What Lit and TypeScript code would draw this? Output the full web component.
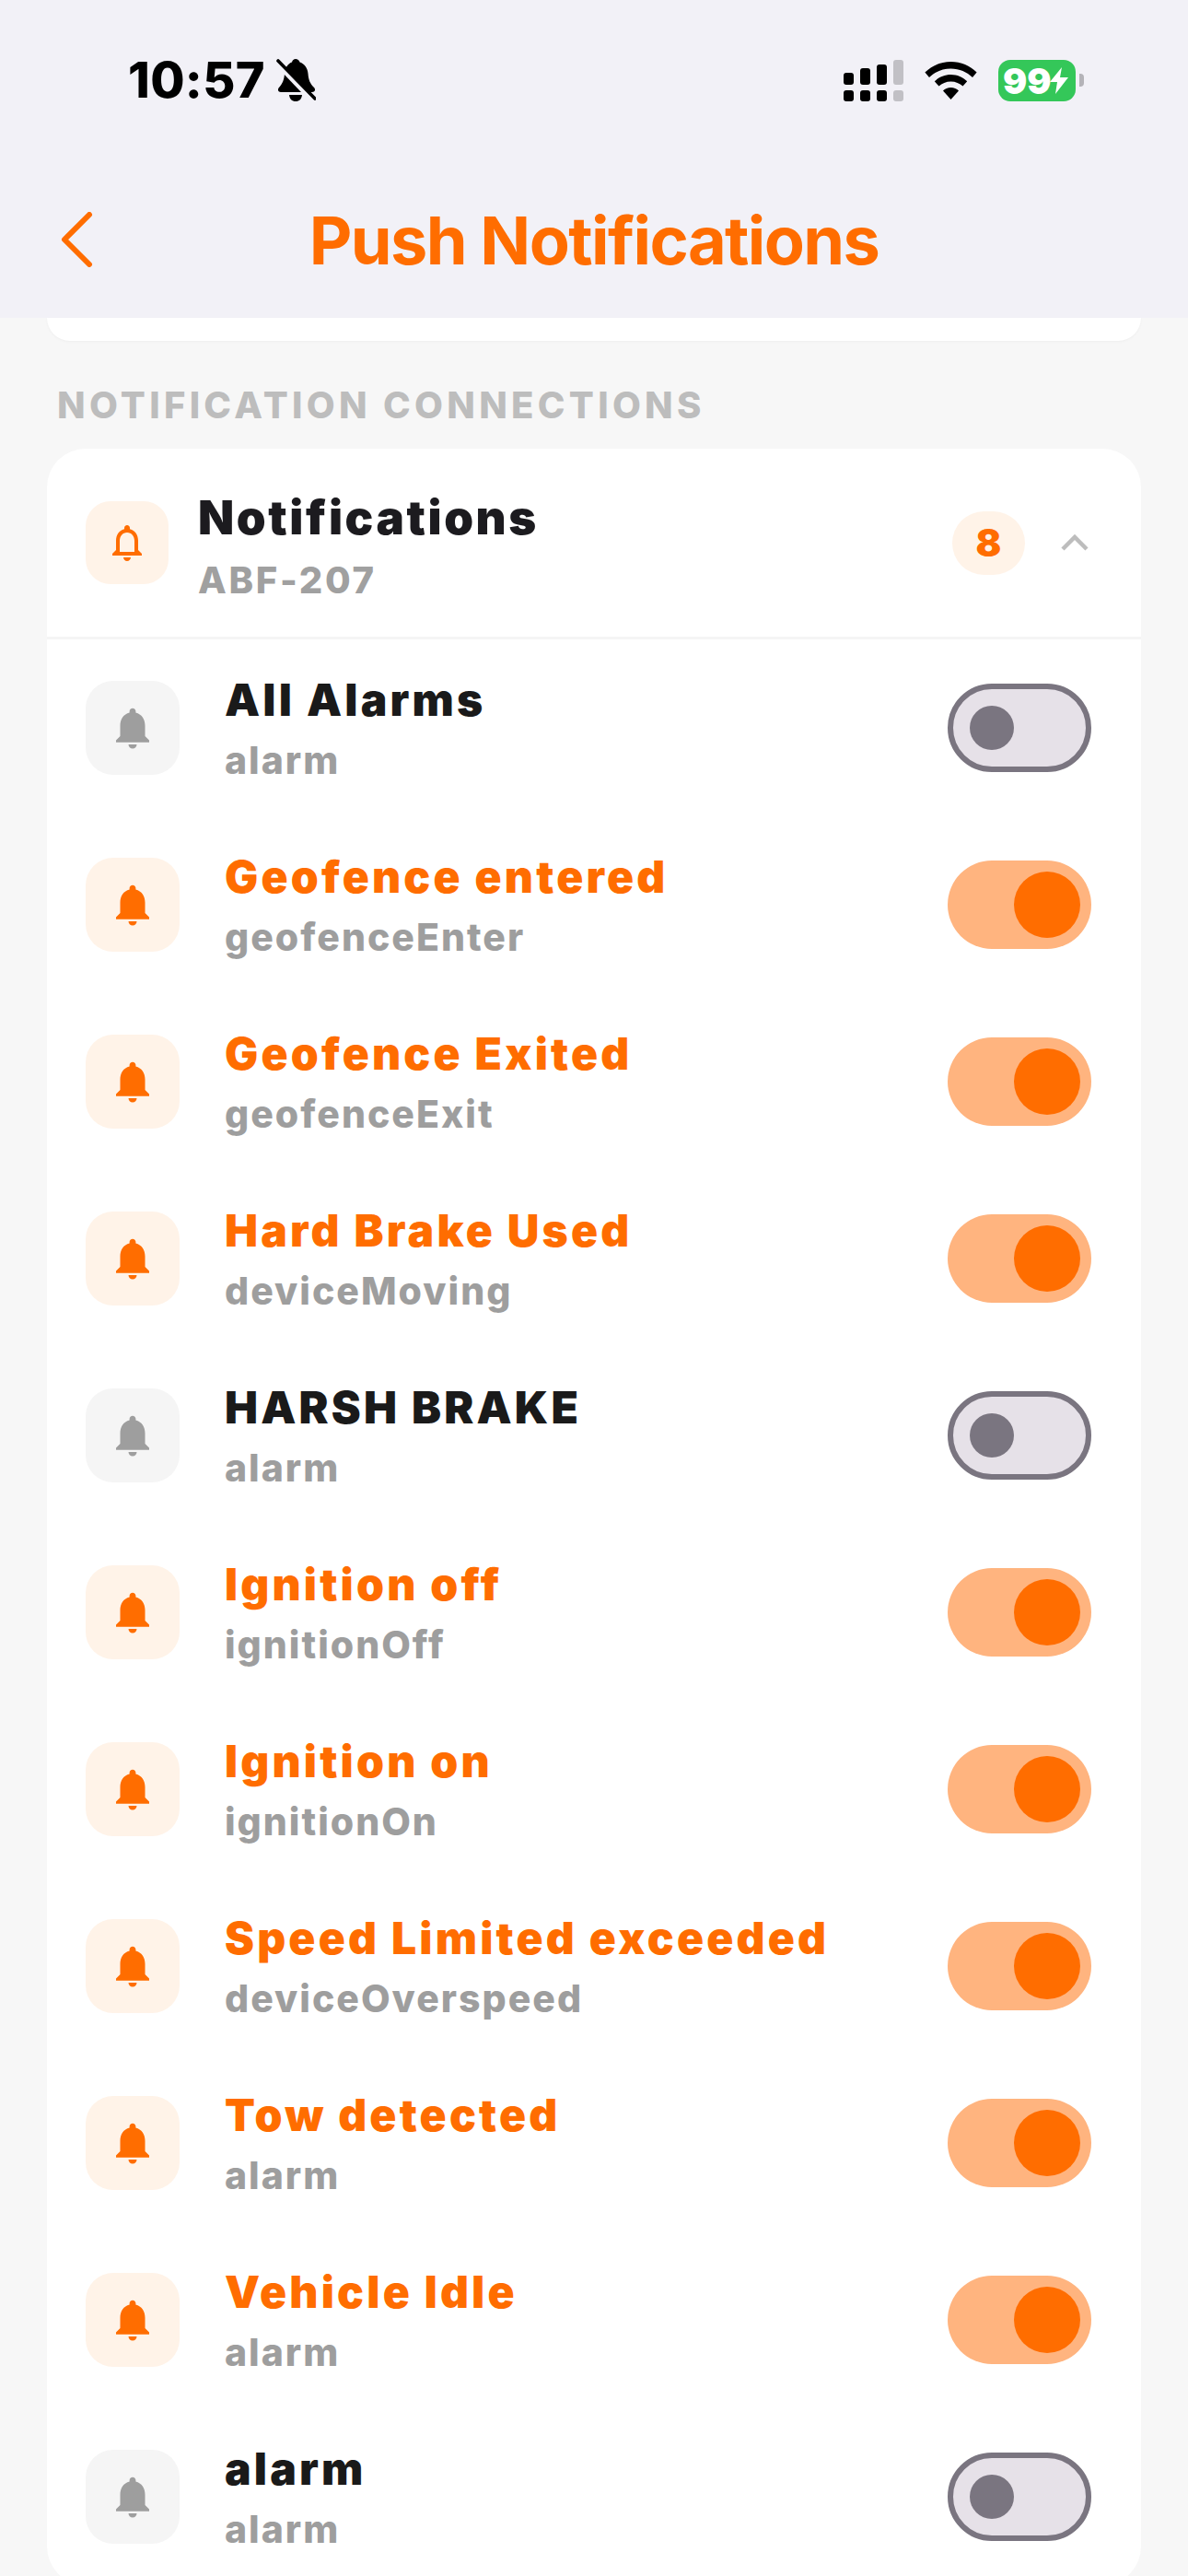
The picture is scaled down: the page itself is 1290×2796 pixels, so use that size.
import { LitElement, html, css, svg } from 'lit';
import { customElement } from 'lit/decorators.js';
import { classMap } from 'lit/directives/class-map.js';

const BELL_FILLED =
  'M12 22c1.1 0 2-.9 2-2h-4c0 1.1.89 2 2 2zm6-6v-5c0-3.07-1.64-5.64-4.5-6.32V4c0-.83-.67-1.5-1.5-1.5s-1.5.67-1.5 1.5v.68C7.63 5.36 6 7.92 6 11v5l-2 2v1h16v-1l-2-2z';
const BELL_OUTLINE =
  'M12 22c1.1 0 2-.9 2-2h-4c0 1.1.9 2 2 2zm6-6v-5c0-3.07-1.63-5.64-4.5-6.32V4c0-.83-.67-1.5-1.5-1.5s-1.5.67-1.5 1.5v.68C7.64 5.36 6 7.92 6 11v5l-2 2v1h16v-1l-2-2zm-2 1H8v-6c0-2.48 1.51-4.5 4-4.5s4 2.02 4 4.5v6z';

const ROWS = [
  { title: 'All Alarms', sub: 'alarm', on: false },
  { title: 'Geofence entered', sub: 'geofenceEnter', on: true },
  { title: 'Geofence Exited', sub: 'geofenceExit', on: true },
  { title: 'Hard Brake Used', sub: 'deviceMoving', on: true },
  { title: 'HARSH BRAKE', sub: 'alarm', on: false },
  { title: 'Ignition off', sub: 'ignitionOff', on: true },
  { title: 'Ignition on', sub: 'ignitionOn', on: true },
  { title: 'Speed Limited exceeded', sub: 'deviceOverspeed', on: true },
  { title: 'Tow detected', sub: 'alarm', on: true },
  { title: 'Vehicle Idle', sub: 'alarm', on: true },
  { title: 'alarm', sub: 'alarm', on: false },
];

// signal columns: height of the upper bar
const SIGNAL = [13, 18, 22, 27];

@customElement('app-root')
export class AppRoot extends LitElement {
  static styles = css`
    :host {
      display: block;
      width: 1290px;
      height: 2796px;
      overflow: hidden;
      background: #f7f7f7;
      font-family: Inter, 'Liberation Sans', sans-serif;
    }

    /* top bar */
    .top {
      height: 345px;
      background: #f2f1f7;
    }
    .status {
      height: 174px;
      display: flex;
      align-items: center;
      padding: 0 113px 0 139px;
      box-sizing: border-box;
    }
    .time {
      font-size: 54px;
      font-weight: 800;
      letter-spacing: 0.3px;
      color: #000;
      line-height: 1;
    }
    .mute {
      width: 43px;
      height: 47px;
      margin-left: 12px;
      margin-top: 1px;
    }
    .status-right {
      margin-left: auto;
      display: flex;
      align-items: center;
    }
    .signal {
      display: flex;
      gap: 7px;
      height: 45px;
    }
    .signal .col {
      width: 11px;
      display: flex;
      flex-direction: column;
      justify-content: flex-end;
      gap: 6px;
    }
    .signal .col i {
      display: block;
      background: #000;
      border-radius: 3px;
    }
    .signal .col i.low {
      height: 12px;
    }
    .signal .col.dim i {
      background: #c1c0c5;
    }
    .wifi {
      width: 57px;
      height: 41px;
      margin-left: 23px;
    }
    .battery {
      width: 84px;
      height: 45px;
      margin-left: 23px;
      background: #34c759;
      border-radius: 13px;
      display: flex;
      align-items: center;
      padding-left: 5px;
      box-sizing: border-box;
      color: #fff;
      font-size: 39px;
      font-weight: 900;
      line-height: 1;
    }
    .battery svg {
      width: 20px;
      height: 29px;
      margin-left: -2px;
    }
    .nub {
      width: 5px;
      height: 14px;
      margin-left: 4px;
      background: #b4b3b8;
      border-radius: 0 4px 4px 0;
    }

    .nav {
      height: 171px;
      display: grid;
      grid-template-columns: 1fr auto 1fr;
      align-items: center;
    }
    .back {
      width: 36px;
      height: 60px;
      margin-left: 65px;
      display: block;
    }
    .nav-title {
      font-size: 72px;
      font-weight: 700;
      letter-spacing: -1.6px;
      color: #ff6d00;
      line-height: 1;
      padding-top: 3px;
    }

    /* scrolled content */
    .content {
      padding: 0 51px;
    }
    .peek {
      height: 25px;
      background: #fff;
      border-radius: 0 0 42px 42px;
      box-shadow: 0 1px 3px rgba(0, 0, 0, 0.04);
    }
    .section {
      margin: 47px 0 0 11px;
      font-size: 40px;
      font-weight: 800;
      letter-spacing: 4.3px;
      line-height: 46px;
      color: #bdbdbd;
      white-space: nowrap;
    }
    .card {
      margin-top: 24px;
      background: #fff;
      border-radius: 42px;
    }
    .card-head {
      height: 207px;
      box-sizing: border-box;
      border-bottom: 3px solid #f5f5f5;
      display: flex;
      align-items: center;
      padding: 0 57px 0 42px;
    }
    .head-icon {
      width: 90px;
      height: 90px;
      border-radius: 27px;
      background: #fff3e8;
      display: flex;
      align-items: center;
      justify-content: center;
    }
    .head-icon svg {
      width: 48px;
      height: 48px;
      fill: #ff6d00;
    }
    .head-text {
      margin: 6px 0 0 32px;
      flex: 1;
    }
    .head-title {
      font-size: 51px;
      font-weight: 900;
      line-height: 62px;
      letter-spacing: 2.6px;
      color: #1c1b1f;
    }
    .head-sub {
      margin-top: 14px;
      font-size: 40px;
      font-weight: 800;
      line-height: 46px;
      letter-spacing: 2.7px;
      color: #a0a0a0;
    }
    .badge {
      width: 79px;
      height: 69px;
      border-radius: 35px;
      background: #fff3e8;
      display: flex;
      align-items: center;
      justify-content: center;
      font-size: 41px;
      font-weight: 900;
      color: #ff6d00;
    }
    .chevron {
      width: 30px;
      height: 18px;
      margin-left: 39px;
    }

    .row {
      height: 192px;
      box-sizing: border-box;
      display: flex;
      align-items: center;
      padding: 0 54px 0 42px;
    }
    .row-icon {
      width: 102px;
      height: 102px;
      border-radius: 30px;
      background: #f5f5f5;
      display: flex;
      align-items: center;
      justify-content: center;
    }
    .row-icon svg {
      width: 54px;
      height: 54px;
      fill: #9e9e9e;
    }
    .row.on .row-icon {
      background: #fff3e8;
    }
    .row.on .row-icon svg {
      fill: #ff6d00;
    }
    .row-text {
      margin-left: 49px;
      flex: 1;
    }
    .row-title {
      font-size: 48px;
      font-weight: 900;
      line-height: 58px;
      letter-spacing: 3.2px;
      color: #1a1a1a;
      white-space: nowrap;
      margin-top: -1px;
    }
    .row.on .row-title {
      color: #ff6d00;
    }
    .row-sub {
      margin-top: 13px;
      font-size: 41px;
      font-weight: 800;
      line-height: 46px;
      letter-spacing: 2px;
      color: #9e9e9e;
    }

    .toggle {
      width: 156px;
      height: 96px;
      box-sizing: border-box;
      border-radius: 48px;
      display: flex;
      align-items: center;
      background: #e6e1e8;
      border: 6px solid #7a7580;
      padding-left: 18px;
    }
    .toggle i {
      display: block;
      width: 48px;
      height: 48px;
      border-radius: 50%;
      background: #7a7580;
    }
    .toggle.on {
      background: #ffb47f;
      border: 0;
      padding: 0 12px 0 0;
      justify-content: flex-end;
    }
    .toggle.on i {
      width: 72px;
      height: 72px;
      background: #ff6d00;
    }
  `;

  private renderStatus() {
    return html`
      <div class="status">
        <span class="time">10:57</span>
        <svg class="mute" viewBox="0 0 43 47">
          <path
            d="M21 0C23 0 25 1.5 25.5 3.5C31 5.5 34 10 34.5 16C35 23 37 27 41 31C43 33 42 36 39 36H5C2 36 1 33 3 31C6.5 27 8.5 23 9 16C9.5 10 12 5.5 17 3.5C17.5 1.5 19 0 21 0Z"
          />
          <path d="M14 39H28C27.5 43.5 25 46 21 46C17 46 14.5 43.5 14 39Z" />
          <path d="M-1 3L40 46" stroke="#f2f1f7" stroke-width="5" />
          <path d="M2 2L42 43" stroke="#000" stroke-width="3.6" stroke-linecap="round" />
        </svg>
        <div class="status-right">
          <div class="signal">
            ${SIGNAL.map(
              (h, i) => html`
                <div class=${classMap({ col: true, dim: i === 3 })}>
                  <i style="height:${h}px"></i>
                  <i class="low"></i>
                </div>
              `
            )}
          </div>
          <svg class="wifi" viewBox="0 0 57 41">
            <path
              d="M28.5 0C17.5 0 7.6 4.4.4 11.6L5 17C11 11 19.3 7.4 28.5 7.4S46 11 52 17L56.6 11.6C49.4 4.4 39.5 0 28.5 0Z"
            />
            <path
              d="M28.5 14C21.6 14 15.4 16.8 10.8 21.3L15.5 26.6C18.8 23.4 23.4 21.4 28.5 21.4S38.2 23.4 41.5 26.6L46.2 21.3C41.6 16.8 35.4 14 28.5 14Z"
            />
            <path d="M28.5 28C25.2 28 22.1 29.3 20 31.5L28.5 41L37 31.5C34.9 29.3 31.8 28 28.5 28Z" />
          </svg>
          <div class="battery">
            99
            <svg viewBox="0 0 20 29"><path fill="#fff" d="M13 0L0 16H8L6 29L20 11H11Z" /></svg>
          </div>
          <div class="nub"></div>
        </div>
      </div>
    `;
  }

  private bell(path: string) {
    return html`<svg viewBox="0 0 24 24">${svg`<path d=${path}></path>`}</svg>`;
  }

  private renderRow(row: { title: string; sub: string; on: boolean }) {
    return html`
      <div class=${classMap({ row: true, on: row.on })}>
        <div class="row-icon">${this.bell(BELL_FILLED)}</div>
        <div class="row-text">
          <div class="row-title">${row.title}</div>
          <div class="row-sub">${row.sub}</div>
        </div>
        <div class=${classMap({ toggle: true, on: row.on })}><i></i></div>
      </div>
    `;
  }

  render() {
    return html`
      <div class="top">
        ${this.renderStatus()}
        <div class="nav">
          <svg class="back" viewBox="0 0 36 60">
            <path
              d="M32 3L5 30L32 57"
              fill="none"
              stroke="#ff6d00"
              stroke-width="6"
              stroke-linecap="round"
              stroke-linejoin="round"
            />
          </svg>
          <div class="nav-title">Push Notifications</div>
          <div></div>
        </div>
      </div>
      <div class="content">
        <div class="peek"></div>
        <div class="section">NOTIFICATION CONNECTIONS</div>
        <div class="card">
          <div class="card-head">
            <div class="head-icon">${this.bell(BELL_OUTLINE)}</div>
            <div class="head-text">
              <div class="head-title">Notifications</div>
              <div class="head-sub">ABF-207</div>
            </div>
            <div class="badge">8</div>
            <svg class="chevron" viewBox="0 0 30 18">
              <path d="M2 16L15 3L28 16" fill="none" stroke="#bdbdbd" stroke-width="4.5" />
            </svg>
          </div>
          ${ROWS.map((r) => this.renderRow(r))}
        </div>
      </div>
    `;
  }
}
